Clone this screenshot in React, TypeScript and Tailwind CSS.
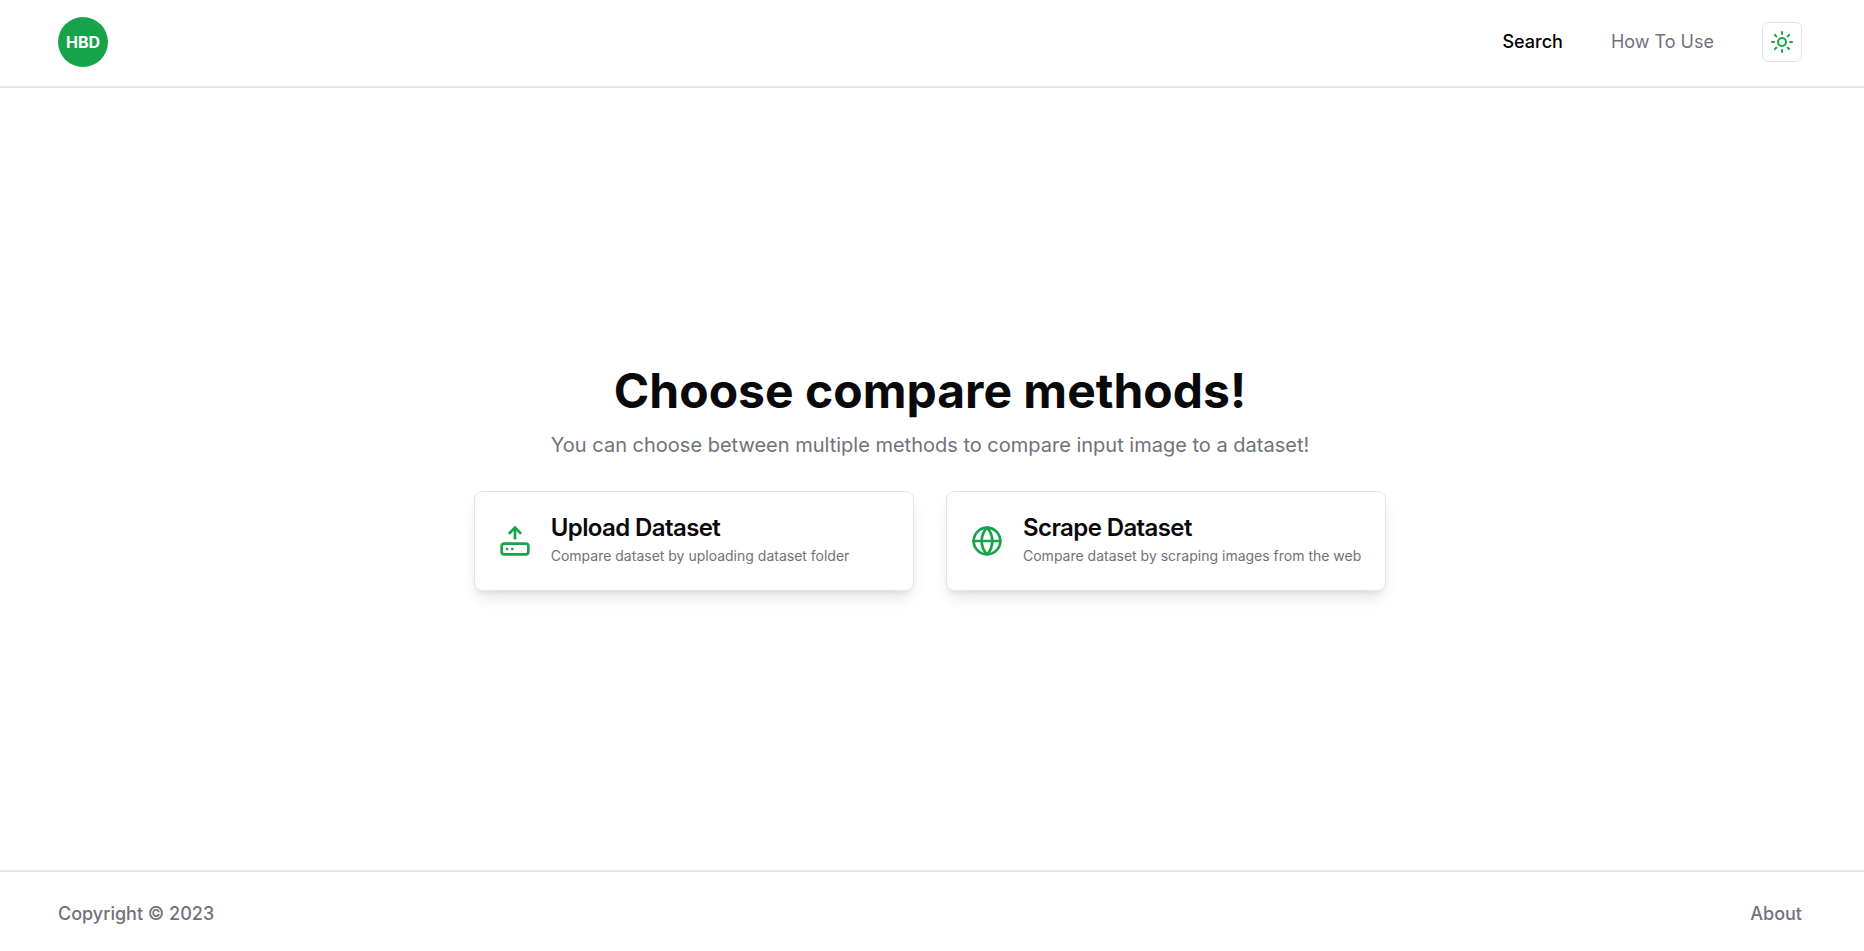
import { Globe, HardDriveUpload, Sun, type LucideIcon } from "lucide-react";

type Method = {
  title: string;
  description: string;
  href: string;
  icon: LucideIcon;
};

const methods: Method[] = [
  {
    title: "Upload Dataset",
    description: "Compare dataset by uploading dataset folder",
    href: "#upload",
    icon: HardDriveUpload,
  },
  {
    title: "Scrape Dataset",
    description: "Compare dataset by scraping images from the web",
    href: "#scrape",
    icon: Globe,
  },
];

function MethodCard({ title, description, href, icon: Icon }: Method) {
  return (
    <a
      href={href}
      className="flex items-center gap-5 rounded-lg border border-zinc-200 bg-white px-6 py-5 shadow-lg"
    >
      <Icon className="size-8 shrink-0 text-[#16a34a]" aria-hidden="true" />
      <div className="pb-[2px]">
        <h2 className="text-2xl font-semibold tracking-tight">{title}</h2>
        <p className="text-sm leading-6 text-zinc-500">{description}</p>
      </div>
    </a>
  );
}

export default function App() {
  return (
    <div className="flex min-h-screen flex-col bg-white font-[Inter,sans-serif] text-zinc-950">
      <header className="flex items-center justify-between border-b-2 border-[#e4e4e4] pt-[17px] pr-[62px] pb-[19px] pl-[58px]">
        <a
          href="#home"
          className="flex size-[50px] items-center justify-center rounded-full bg-[#16a34a] font-bold text-white"
        >
          HBD
        </a>
        <nav className="flex items-center gap-12 text-lg font-medium">
          <a href="#search" className="text-black">
            Search
          </a>
          <a href="#how-to-use" className="font-normal text-zinc-500">
            How To Use
          </a>
          <button
            type="button"
            aria-label="Toggle theme"
            className="flex size-10 items-center justify-center rounded-md border border-zinc-200 text-[#16a34a]"
          >
            <Sun className="size-6" aria-hidden="true" />
          </button>
        </nav>
      </header>

      <main className="flex flex-1 flex-col items-center justify-center pr-1">
        <h1 className="text-5xl font-bold">Choose compare methods!</h1>
        <p className="mt-4 text-xl text-zinc-500">
          You can choose between multiple methods to compare input image to a dataset!
        </p>
        <div className="mt-8 grid grid-cols-2 gap-8">
          {methods.map((method) => (
            <MethodCard key={method.title} {...method} />
          ))}
        </div>
      </main>

      <footer className="flex items-center justify-between border-t-2 border-[#e4e4e4] pt-7 pr-[62px] pb-[23px] pl-[58px] text-lg font-medium text-zinc-500">
        <p>Copyright © 2023</p>
        <a href="#about">About</a>
      </footer>
    </div>
  );
}
